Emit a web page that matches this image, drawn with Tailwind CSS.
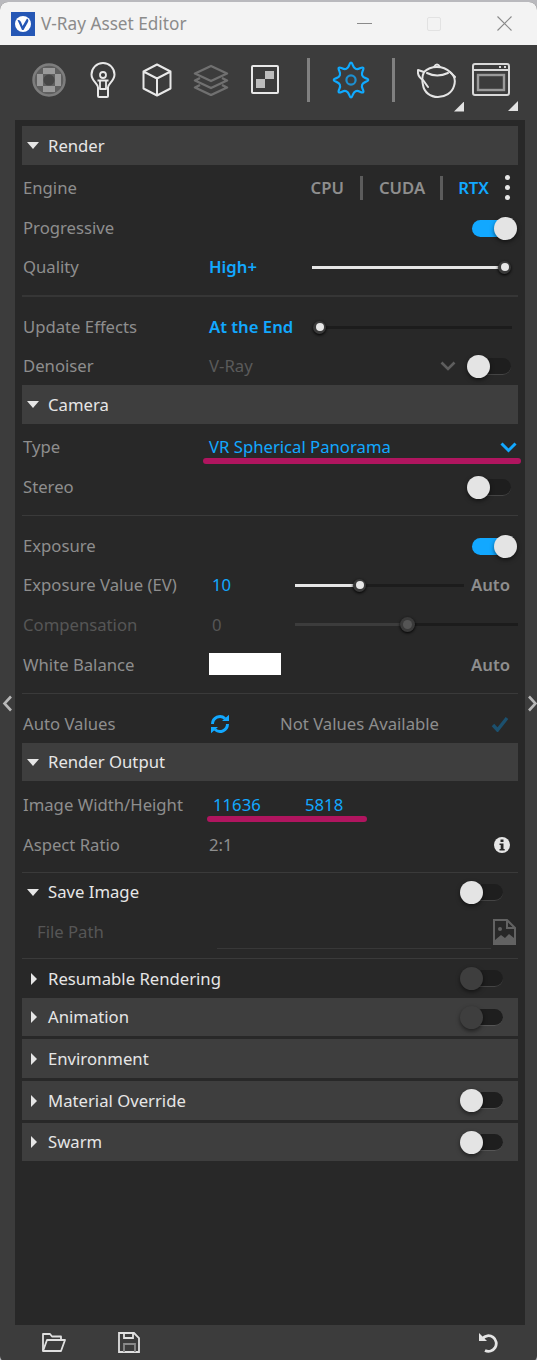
<!DOCTYPE html>
<html lang="en">
<head>
  <meta charset="UTF-8">
  <title>V-Ray Asset Editor</title>
  <script src="https://cdn.jsdelivr.net/npm/@tailwindcss/browser@4"></script>
</head>
<body class="bg-[#b9b9bd]">
  <div class="relative h-[1360px] w-[537px] overflow-hidden rounded-t-lg rounded-b-md bg-[#3c3c3c] mt-[2px] font-['Noto_Sans',sans-serif] text-[16.7px] text-[#8e8e8e]">

    <!-- Title bar -->
    <header class="flex h-[43px] items-center bg-[#f3f3f3] pl-[11px]">
      <div class="flex h-6 w-6 items-center justify-center bg-[#2557b5]">
        <svg width="18" height="18" viewBox="0 0 18 18"><circle cx="9" cy="9" r="8" fill="#fff"/><path d="M3.5 5 Q6 4.5 7 7 L8.6 11 L13 3.5 Q15.5 5 13.5 8 L9.5 15 H8 Z" fill="#2557b5"/></svg>
      </div>
      <span class="ml-[6px] text-[17.2px] text-[#8b8b8b]">V-Ray Asset Editor</span>
      <div class="ml-auto flex items-center">
        <div class="h-px w-[15px] bg-[#8a8a8a]"></div>
        <div class="ml-[55px] h-[14px] w-[14px] rounded-[2px] border border-[#e2e2e2]"></div>
        <svg class="ml-[56px] mr-[25px]" width="15" height="15" viewBox="0 0 15 15"><path d="M0.5 0.5 L14.5 14.5 M14.5 0.5 L0.5 14.5" stroke="#8a8a8a" stroke-width="1.1"/></svg>
      </div>
    </header>

    <!-- Toolbar -->
    <nav class="flex h-[75px] items-center pl-[32px] pb-[6px]">
      <svg width="34" height="34" viewBox="0 0 34 34">
        <circle cx="17" cy="17" r="15.5" fill="#5f5f5f" stroke="#7d7d7d" stroke-width="2.5"/>
        <path d="M11 5h12v6h-12z M5 11h6v12h-6z M23 11h6v12h-6z M11 23h12v6h-12z" fill="#9a9a9a"/>
        <circle cx="17" cy="17" r="5.5" fill="#464646"/>
      </svg>
      <svg class="ml-[24px]" width="26" height="36" viewBox="0 0 26 36" fill="none" stroke="#e8e8e8" stroke-width="2" stroke-linejoin="round">
        <path d="M8 34 V25.5 C8 21.5 1.5 19 1.5 12.5 A11.5 11.5 0 0 1 24.5 12.5 C24.5 19 18 21.5 18 25.5 V34 Q18 35 17 35 H9 Q8 35 8 34 Z"/>
        <circle cx="13" cy="13" r="3" stroke-width="1.8"/>
        <path d="M7.5 18.5 H18.5 M10 18.5 V27 H16 V18.5" stroke-width="1.8"/>
      </svg>
      <svg class="ml-[26px]" width="30" height="34" viewBox="0 0 30 34" fill="none" stroke="#e8e8e8" stroke-width="2" stroke-linejoin="round">
        <path d="M15 1.5 L28.5 8.5 V25.5 L15 32.5 L1.5 25.5 V8.5 Z M1.5 8.5 L15 15.5 L28.5 8.5 M15 15.5 V32.5"/>
      </svg>
      <svg class="ml-[21px]" width="36" height="32" viewBox="0 0 36 32" fill="none" stroke="#707070" stroke-width="2.4" stroke-linejoin="round">
        <path d="M18 2 L34 9.5 L18 17 L2 9.5 Z M7 14 L2 16.5 L18 24 L34 16.5 L29 14 M7 21 L2 23.5 L18 31 L34 23.5 L29 21"/>
      </svg>
      <svg class="ml-[22px]" width="28" height="29" viewBox="0 0 28 29">
        <rect x="1" y="1" width="26" height="27" rx="1" fill="none" stroke="#e8e8e8" stroke-width="2"/>
        <path d="M14 6 H23 V14 H14 Z M5 14 H14 V23 H5 Z" fill="#bdbdbd"/>
      </svg>
      <div class="ml-[28px] h-[44px] w-[3px] bg-[#808080]"></div>
      <svg class="ml-[23px] overflow-visible" width="36" height="36" viewBox="0 0 36 36" fill="none">
        <path d="M19.9 3.4 Q21.8 8.8 26.95 6.35 Q32.1 3.9 29.65 9.05 Q27.2 14.2 32.6 16.1 Q38 18 32.6 19.9 Q27.2 21.8 29.65 26.95 Q32.1 32.1 26.95 29.65 Q21.8 27.2 19.9 32.6 Q18 38 16.1 32.6 Q14.2 27.2 9.05 29.65 Q3.9 32.1 6.35 26.95 Q8.8 21.8 3.4 19.9 Q-2 18 3.4 16.1 Q8.8 14.2 6.35 9.05 Q3.9 3.9 9.05 6.35 Q14.2 8.8 16.1 3.4 Q18 -2 19.9 3.4 Z" stroke="#10aaff" stroke-width="2.2"/>
        <circle cx="18" cy="18" r="4.6" stroke="#1d8fd0" stroke-width="2.2"/>
      </svg>
      <div class="ml-[23px] h-[44px] w-[3px] bg-[#808080]"></div>
      <div class="relative ml-[22px] h-[36px] w-[40px]">
        <svg width="40" height="36" viewBox="0 0 40 36" fill="none" stroke="#e4e4e4" stroke-width="2" stroke-linejoin="round" stroke-linecap="round">
          <path d="M7 10 Q12 5 20 5 Q28 5 33 10 C38 14 39 18 37 24 C35 31 28 35 21 35 C13 35 7 30 6 23 C5 19 5 14 7 10 Z"/>
          <path d="M7 10 L1 8 Q0 14 6 18 L11 25 M10 11 Q20 16 31 11 M33 10 L38 15 M17 5 Q20 0 23 5"/>
        </svg>
        <div class="absolute right-[-7px] top-[40px] h-[10px] w-[10px] bg-[#e2e2e2] [clip-path:polygon(100%_0,100%_100%,0_100%)]"></div>
      </div>
      <div class="relative ml-[15px] h-[33px] w-[38px]">
        <svg width="38" height="33" viewBox="0 0 38 33" fill="none" stroke="#d9d9d9" stroke-width="2">
          <rect x="1" y="1" width="36" height="31" rx="2"/>
          <path d="M1 7 H37"/>
          <rect x="6" y="12" width="26" height="15" stroke="#9a9a9a" stroke-width="2.4"/>
          <path d="M27 4 H29 M32 4 H34" stroke-width="2"/>
        </svg>
        <div class="absolute right-[-8px] top-[38px] h-[10px] w-[10px] bg-[#e2e2e2] [clip-path:polygon(100%_0,100%_100%,0_100%)]"></div>
      </div>
    </nav>

    <!-- Panel -->
    <main class="ml-[15px] mr-[12px] flex h-[1205px] flex-col bg-[#282828] px-[7px] pt-[6px]">

      <!-- Render -->
      <div class="flex h-[39px] shrink-0 items-center bg-[#3e3e3e] pl-[5px] text-[#e6e6e6]">
        <div class="h-0 w-0 border-x-[6px] border-t-[7px] border-x-transparent border-t-[#e6e6e6]"></div>
        <span class="ml-[9px]">Render</span>
      </div>
      <div class="flex h-[43px] items-center pl-px pt-[3px]">
        <span>Engine</span>
        <div class="ml-auto flex items-center font-semibold">
          <span>CPU</span>
          <div class="mx-[16px] h-[24px] w-[3px] bg-[#5c5c5c]"></div>
          <span>CUDA</span>
          <div class="mx-[15px] h-[24px] w-[3px] bg-[#5c5c5c]"></div>
          <span class="text-[#12a8ff]">RTX</span>
          <div class="ml-[16px] mr-[8px] flex flex-col gap-[5px]">
            <div class="h-[5px] w-[5px] rounded-full bg-[#e6e6e6]"></div>
            <div class="h-[5px] w-[5px] rounded-full bg-[#e6e6e6]"></div>
            <div class="h-[5px] w-[5px] rounded-full bg-[#e6e6e6]"></div>
          </div>
        </div>
      </div>
      <div class="flex h-[40px] items-center pl-px">
        <span>Progressive</span>
        <div class="relative ml-auto mr-[8px] h-[17px] w-[38px] rounded-full bg-[#12a8ff]">
          <div class="absolute right-[-7px] top-[-3px] h-[23px] w-[23px] rounded-full bg-[#e4e4e4] shadow-[0_2px_4px_rgba(0,0,0,.5)]"></div>
        </div>
      </div>
      <div class="flex h-[38px] items-center pl-px">
        <span class="w-[186px] shrink-0">Quality</span>
        <span class="w-[103px] shrink-0 font-semibold text-[#12a8ff]">High+</span>
        <div class="relative h-[3px] w-[188px] bg-[#e6e6e6]">
          <div class="absolute right-[-11px] top-[-5px] flex h-[13px] w-[13px] items-center justify-center rounded-full bg-[#3a3a3a] shadow-[0_1px_3px_#000]"><div class="h-[8px] w-[8px] rounded-full bg-[#e6e6e6]"></div></div>
        </div>
      </div>
      <div class="mt-[9px] h-[2px] bg-[#363636]"></div>
      <div class="mt-[10px] flex h-[40px] items-center pl-px">
        <span class="w-[186px] shrink-0">Update Effects</span>
        <span class="w-[104px] shrink-0 font-semibold text-[#12a8ff]">At the End</span>
        <div class="relative h-[3px] w-[199px] bg-[#1c1c1c]">
          <div class="absolute left-0 top-[-5px] flex h-[13px] w-[13px] items-center justify-center rounded-full bg-[#3a3a3a] shadow-[0_1px_3px_#000]"><div class="h-[8px] w-[8px] rounded-full bg-[#e6e6e6]"></div></div>
        </div>
      </div>
      <div class="flex h-[38px] items-center pl-px">
        <span class="w-[186px] shrink-0">Denoiser</span>
        <span class="text-[#5a5a5a]">V-Ray</span>
        <svg class="ml-auto" width="16" height="10" viewBox="0 0 16 10" fill="none"><path d="M1.5 1.5 L8 8 L14.5 1.5" stroke="#5e5e5e" stroke-width="2.6"/></svg>
        <div class="relative ml-[18px] mr-[7px] h-[17px] w-[37px] rounded-full border-b border-[#444] bg-[#1e1e1e]">
          <div class="absolute left-[-7px] top-[-3px] h-[23px] w-[23px] rounded-full bg-[#e4e4e4] shadow-[0_2px_4px_rgba(0,0,0,.5)]"></div>
        </div>
      </div>

      <!-- Camera -->
      <div class="flex h-[39px] shrink-0 items-center bg-[#3e3e3e] pl-[5px] text-[#e6e6e6]">
        <div class="h-0 w-0 border-x-[6px] border-t-[7px] border-x-transparent border-t-[#e6e6e6]"></div>
        <span class="ml-[9px]">Camera</span>
      </div>
      <div class="relative flex h-[44px] items-center pl-px pt-[2px]">
        <span class="w-[186px] shrink-0">Type</span>
        <span class="text-[#12a8ff]">VR Spherical Panorama</span>
        <svg class="ml-auto mr-[1px]" width="17" height="11" viewBox="0 0 17 11" fill="none"><path d="M1.5 1.5 L8.5 8.5 L15.5 1.5" stroke="#12a8ff" stroke-width="3"/></svg>
        <div class="absolute left-[181px] top-[34px] h-[6px] w-[318px] rounded-full bg-[#b0155f]"></div>
      </div>
      <div class="flex h-[38px] items-center pl-px">
        <span>Stereo</span>
        <div class="relative ml-auto mr-[7px] h-[17px] w-[37px] rounded-full border-b border-[#444] bg-[#1e1e1e]">
          <div class="absolute left-[-7px] top-[-3px] h-[23px] w-[23px] rounded-full bg-[#e4e4e4] shadow-[0_2px_4px_rgba(0,0,0,.5)]"></div>
        </div>
      </div>
      <div class="mt-[9px] h-[1px] bg-[#3a3a3a]"></div>
      <div class="mt-[10px] flex h-[40px] items-center pl-px">
        <span>Exposure</span>
        <div class="relative ml-auto mr-[8px] h-[17px] w-[38px] rounded-full bg-[#12a8ff]">
          <div class="absolute right-[-7px] top-[-3px] h-[23px] w-[23px] rounded-full bg-[#e4e4e4] shadow-[0_2px_4px_rgba(0,0,0,.5)]"></div>
        </div>
      </div>
      <div class="flex h-[38px] items-center pl-px">
        <span class="w-[189px] shrink-0">Exposure Value (EV)</span>
        <span class="w-[83px] shrink-0 text-[#12a8ff]">10</span>
        <div class="relative h-[3px] w-[169px] bg-[#1c1c1c]">
          <div class="h-full w-[65px] bg-[#e6e6e6]"></div>
          <div class="absolute left-[58px] top-[-5px] flex h-[13px] w-[13px] items-center justify-center rounded-full bg-[#3a3a3a] shadow-[0_1px_3px_#000]"><div class="h-[8px] w-[8px] rounded-full bg-[#e6e6e6]"></div></div>
        </div>
        <span class="ml-[7px] font-semibold">Auto</span>
      </div>
      <div class="flex h-[41px] items-center pl-px text-[#565656]">
        <span class="w-[189px] shrink-0">Compensation</span>
        <span class="w-[83px] shrink-0">0</span>
        <div class="relative h-[3px] w-[223px] bg-[#1c1c1c]">
          <div class="h-full w-[112px] bg-[#3c3c3c]"></div>
          <div class="absolute left-[105px] top-[-6px] flex h-[15px] w-[15px] items-center justify-center rounded-full bg-[#3a3a3a] shadow-[0_1px_3px_#000]"><div class="h-[9px] w-[9px] rounded-full bg-[#555]"></div></div>
        </div>
      </div>
      <div class="flex h-[40px] items-center pl-px">
        <span class="w-[186px] shrink-0">White Balance</span>
        <div class="mb-[2px] h-[22px] w-[72px] bg-white"></div>
        <span class="ml-auto mr-[8px] font-semibold">Auto</span>
      </div>
      <div class="mt-[8px] h-[1px] bg-[#3a3a3a]"></div>
      <div class="mt-[10px] flex h-[40px] items-center pl-px">
        <span class="w-[186px] shrink-0">Auto Values</span>
        <svg width="22" height="20" viewBox="0 0 22 20" fill="none" stroke="#12a8ff" stroke-width="3">
          <path d="M3.5 10 A7.5 7.5 0 0 1 16 4.5"/><path d="M18.5 10 A7.5 7.5 0 0 1 6 15.5"/>
          <path d="M13 7 H20 V0.8 Z M9 13 H2 V19.2 Z" fill="#12a8ff" stroke="none"/>
        </svg>
        <span class="ml-[49px]">Not Values Available</span>
        <svg class="ml-auto mr-[9px]" width="18" height="16" viewBox="0 0 18 16" fill="none"><path d="M2 9 L6.5 14 L16 2" stroke="#1c506e" stroke-width="3.4"/></svg>
      </div>

      <!-- Render Output -->
      <div class="mt-[-1px] flex h-[38px] shrink-0 items-center bg-[#3e3e3e] pl-[5px] text-[#e6e6e6]">
        <div class="h-0 w-0 border-x-[6px] border-t-[7px] border-x-transparent border-t-[#e6e6e6]"></div>
        <span class="ml-[9px]">Render Output</span>
      </div>
      <div class="relative flex h-[45px] items-center pl-px pt-[3px]">
        <span class="w-[190px] shrink-0">Image Width/Height</span>
        <span class="w-[92px] shrink-0 text-[#12a8ff]">11636</span>
        <span class="text-[#12a8ff]">5818</span>
        <div class="absolute left-[185px] top-[35px] h-[6px] w-[160px] rounded-full bg-[#b0155f]"></div>
      </div>
      <div class="flex h-[38px] items-center pl-px">
        <span class="w-[186px] shrink-0">Aspect Ratio</span>
        <span>2:1</span>
        <svg class="ml-auto mr-[8px]" width="16" height="16" viewBox="0 0 16 16"><circle cx="8" cy="8" r="8" fill="#e6e6e6"/><path d="M6.5 2.5 h3 v2.5 h-3z M5.5 6.5 h4 v5.5 h1.2 v1.6 h-5.2 v-1.6 h1.2 v-3.9 h-1.2z" fill="#282828"/></svg>
      </div>
      <div class="mt-[8px] h-[1px] bg-[#3a3a3a]"></div>

      <!-- Save Image -->
      <div class="flex h-[38px] items-center pl-[5px] text-[#e6e6e6]">
        <div class="h-0 w-0 border-x-[6px] border-t-[7px] border-x-transparent border-t-[#e6e6e6]"></div>
        <span class="ml-[9px]">Save Image</span>
        <div class="relative ml-auto mr-[15px] h-[17px] w-[36px] rounded-full border-b border-[#444] bg-[#1e1e1e]">
          <div class="absolute left-[-7px] top-[-3px] h-[23px] w-[23px] rounded-full bg-[#e4e4e4] shadow-[0_2px_4px_rgba(0,0,0,.5)]"></div>
        </div>
      </div>
      <div class="relative flex h-[40px] items-center pl-[15px] pt-[2px] text-[#565656]">
        <span>File Path</span>
        <div class="absolute left-[195px] top-[37px] h-px w-[274px] bg-[#383838]"></div>
        <svg class="ml-auto mr-[2px]" width="23" height="26" viewBox="0 0 23 26" fill="none" stroke="#626262" stroke-width="2">
          <path d="M1 1 H14 L22 9 V25 H1 Z M14 1 V9 H22"/>
          <circle cx="7" cy="10" r="2" fill="#626262" stroke="none"/>
          <path d="M2 21 L8 16 L12 19 L16 15 L21 19 V24 H2 Z" fill="#626262" stroke="none"/>
        </svg>
      </div>
      <div class="mt-[7px] h-[1px] bg-[#3a3a3a]"></div>

      <!-- Collapsed sections -->
      <div class="flex h-[39px] shrink-0 items-center pl-[9px] text-[#e6e6e6]">
        <div class="h-0 w-0 border-y-[6px] border-l-[6px] border-y-transparent border-l-[#e6e6e6]"></div>
        <span class="ml-[11px]">Resumable Rendering</span>
        <div class="relative ml-auto mr-[15px] h-[17px] w-[36px] rounded-full border-b border-[#444] bg-[#1e1e1e]">
          <div class="absolute left-[-7px] top-[-3px] h-[23px] w-[23px] rounded-full bg-[#3e3e3e] shadow-[0_2px_4px_rgba(0,0,0,.5)]"></div>
        </div>
      </div>
      <div class="flex h-[38px] shrink-0 items-center bg-[#3e3e3e] pl-[9px] text-[#e6e6e6]">
        <div class="h-0 w-0 border-y-[6px] border-l-[6px] border-y-transparent border-l-[#e6e6e6]"></div>
        <span class="ml-[11px]">Animation</span>
        <div class="relative ml-auto mr-[15px] h-[17px] w-[36px] rounded-full border-b border-[#555] bg-[#1e1e1e]">
          <div class="absolute left-[-7px] top-[-3px] h-[23px] w-[23px] rounded-full bg-[#3e3e3e] shadow-[0_2px_4px_rgba(0,0,0,.5)]"></div>
        </div>
      </div>
      <div class="mt-[3px] flex h-[39px] shrink-0 items-center bg-[#3e3e3e] pl-[9px] text-[#e6e6e6]">
        <div class="h-0 w-0 border-y-[6px] border-l-[6px] border-y-transparent border-l-[#e6e6e6]"></div>
        <span class="ml-[11px]">Environment</span>
      </div>
      <div class="mt-[3px] flex h-[39px] shrink-0 items-center bg-[#3e3e3e] pl-[9px] text-[#e6e6e6]">
        <div class="h-0 w-0 border-y-[6px] border-l-[6px] border-y-transparent border-l-[#e6e6e6]"></div>
        <span class="ml-[11px]">Material Override</span>
        <div class="relative ml-auto mr-[15px] h-[17px] w-[36px] rounded-full border-b border-[#555] bg-[#1e1e1e]">
          <div class="absolute left-[-7px] top-[-3px] h-[23px] w-[23px] rounded-full bg-[#e4e4e4] shadow-[0_2px_4px_rgba(0,0,0,.5)]"></div>
        </div>
      </div>
      <div class="mt-[3px] flex h-[38px] shrink-0 items-center bg-[#3e3e3e] pl-[9px] text-[#e6e6e6]">
        <div class="h-0 w-0 border-y-[6px] border-l-[6px] border-y-transparent border-l-[#e6e6e6]"></div>
        <span class="ml-[11px]">Swarm</span>
        <div class="relative ml-auto mr-[15px] h-[17px] w-[36px] rounded-full border-b border-[#555] bg-[#1e1e1e]">
          <div class="absolute left-[-7px] top-[-3px] h-[23px] w-[23px] rounded-full bg-[#e4e4e4] shadow-[0_2px_4px_rgba(0,0,0,.5)]"></div>
        </div>
      </div>
    </main>

    <!-- Bottom bar -->
    <footer class="flex h-[35px] items-center pl-[42px] pb-[1px]">
      <svg width="24" height="20" viewBox="0 0 24 20" fill="none" stroke="#e0e0e0" stroke-width="1.8" stroke-linejoin="round">
        <path d="M1 19 V2 H8 L10 4.5 H19 V8"/><path d="M1 19 L5 8 H23 L19 19 Z"/>
      </svg>
      <svg class="ml-[52px]" width="22" height="21" viewBox="0 0 22 21" fill="none" stroke="#e0e0e0" stroke-width="1.8">
        <path d="M1 1 H16 L21 6 V20 H1 Z M6 1 V6 H15 V1"/>
        <path d="M6 20 V12 H17 V20" stroke="#8a8a8a"/>
      </svg>
      <svg class="ml-auto mr-[39px]" width="20" height="21" viewBox="0 0 20 21" fill="none">
        <path d="M4.5 6.5 A7.8 7.8 0 1 1 7 18.5" stroke="#e4e4e4" stroke-width="2.8"/>
        <path d="M1 1 L9 9 H1 Z" fill="#e4e4e4"/>
      </svg>
    </footer>

    <!-- Side collapse arrows -->
    <svg class="absolute left-[2px] top-[693px]" width="11" height="17" viewBox="0 0 11 17" fill="none"><path d="M9 1.5 L2.5 8.5 L9 15.5" stroke="#b8b8b8" stroke-width="2.6"/></svg>
    <svg class="absolute left-[527px] top-[693px]" width="11" height="17" viewBox="0 0 11 17" fill="none"><path d="M2 1.5 L8.5 8.5 L2 15.5" stroke="#b8b8b8" stroke-width="2.6"/></svg>
  </div>
</body>
</html>
